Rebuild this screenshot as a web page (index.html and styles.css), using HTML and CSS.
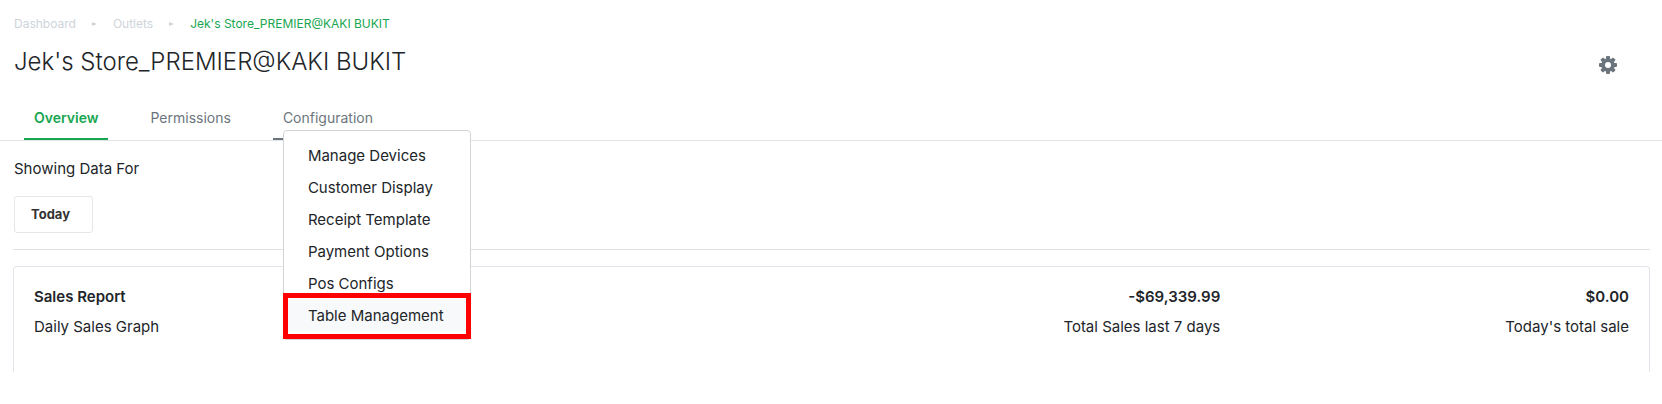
FILE: index.html
```html
<!DOCTYPE html>
<html lang="en">
<head>
    <meta charset="UTF-8">
    <meta name="viewport" content="width=device-width, initial-scale=1.0">
    <title>Jek's Store_PREMIER@KAKI BUKIT</title>
    <link rel="stylesheet" href="styles.css">
</head>
<body>
    <header class="header">
        <nav class="breadcrumb">
            <a href="#">Dashboard</a>
            <span class="arrow"></span>
            <a href="#">Outlets</a>
            <span class="arrow"></span>
            <a href="#" class="current">Jek's Store_PREMIER@KAKI BUKIT</a>
        </nav>
        <div class="title-row">
            <h1>Jek's Store_PREMIER@KAKI BUKIT</h1>
            <button type="button" class="settings" aria-label="Settings">
                <svg width="18" height="18" viewBox="0 0 18 18">
                    <g fill="#6c757d">
                        <rect x="7" y="0" width="4" height="18" rx="1"/>
                        <rect x="7" y="0" width="4" height="18" rx="1" transform="rotate(45 9 9)"/>
                        <rect x="7" y="0" width="4" height="18" rx="1" transform="rotate(90 9 9)"/>
                        <rect x="7" y="0" width="4" height="18" rx="1" transform="rotate(135 9 9)"/>
                        <circle cx="9" cy="9" r="6.8"/>
                    </g>
                    <circle cx="9" cy="9" r="3" fill="#fff"/>
                </svg>
            </button>
        </div>
    </header>
    <nav class="tabs">
        <a href="#" class="tab active">Overview</a>
        <a href="#" class="tab">Permissions</a>
        <div class="dropdown">
            <a href="#" class="tab open">Configuration</a>
            <ul class="menu">
                <li><a href="#">Manage Devices</a></li>
                <li><a href="#">Customer Display</a></li>
                <li><a href="#">Receipt Template</a></li>
                <li><a href="#">Payment Options</a></li>
                <li><a href="#">Pos Configs</a></li>
                <li class="marked"><a href="#">Table Management</a></li>
            </ul>
        </div>
    </nav>
    <main class="content">
        <section class="filter">
            <p>Showing Data For</p>
            <button type="button" class="range">Today</button>
        </section>
        <section class="card">
            <div class="col">
                <h2>Sales Report</h2>
                <p>Daily Sales Graph</p>
            </div>
            <div class="col right">
                <h2>-$69,339.99</h2>
                <p>Total Sales last 7 days</p>
            </div>
            <div class="col right">
                <h2>$0.00</h2>
                <p>Today's total sale</p>
            </div>
        </section>
    </main>
</body>
</html>
```
FILE: styles.css
```css
* {
    padding: 0;
    margin: 0;
    box-sizing: border-box;
}
body {
    font-family: Inter, "Liberation Sans", sans-serif;
    font-size: 15px;
    line-height: 24px;
    color: #212529;
    background-color: #fff;
}
a {
    color: inherit;
    text-decoration: none;
}
li {
    list-style: none;
}
button {
    font-family: inherit;
    background-color: #fff;
    border: none;
    cursor: pointer;
}
.header {
    padding: 14px 14px 0;
}
.breadcrumb {
    display: flex;
    align-items: center;
    gap: 16px;
    font-size: 12px;
    line-height: 20px;
    color: #ced4da;
}
.arrow {
    border-left: 5px solid #ced4da;
    border-top: 2px solid transparent;
    border-bottom: 2px solid transparent;
}
.current {
    color: #18a651;
}
.title-row {
    display: flex;
    align-items: center;
    justify-content: space-between;
    padding: 12px 31px 0 0;
}
h1 {
    font-size: 24px;
    font-weight: 300;
    line-height: 32px;
}
.settings {
    padding-top: 6px;
}
.settings svg {
    display: block;
}
.tabs {
    display: flex;
    gap: 32px;
    padding: 24px 24px 0;
    border-bottom: 1px solid #e2e5e8;
}
.tab {
    display: block;
    padding: 4px 10px 8px;
    font-size: 14px;
    color: #6c757d;
    border-bottom: 2px solid transparent;
}
.active {
    font-weight: 600;
    color: #18a651;
    border-color: #18a651;
}
.open {
    border-color: #6c757d;
}
.dropdown {
    position: relative;
}
.menu {
    position: absolute;
    left: 10px;
    top: 28px;
    padding: 8px 0;
    white-space: nowrap;
    background-color: #fff;
    border: 1px solid #d3d4d5;
    border-radius: 4px;
}
.menu a {
    display: block;
    padding: 5px 26px 3px 24px;
}
.marked {
    position: relative;
    background-color: #f8f9fa;
}
/* red frame round the chosen item */
.marked::after {
    content: "";
    position: absolute;
    left: -1px;
    right: -1px;
    top: -6px;
    bottom: -8px;
    border: 5px solid #f00;
    pointer-events: none;
}
.content {
    padding: 16px 12px 0 13px;
}
.filter {
    padding: 0 1px 16px;
    margin-bottom: 16px;
    border-bottom: 1px solid #dee2e6;
}
.range {
    display: block;
    margin-top: 15px;
    padding: 8px 22px 8px 16px;
    font-size: 13px;
    font-weight: 700;
    line-height: 19px;
    color: #333;
    border: 1px solid #e4e6e9;
    border-radius: 3px;
}
.card {
    display: grid;
    grid-template-columns: 2fr 1fr 1fr;
    padding: 15px 0 30px;
    border: 1px solid #e2e5ec;
    border-bottom: none;
    border-radius: 4px 4px 0 0;
}
.col {
    padding: 0 20px;
}
.col h2 {
    font-size: 15px;
    font-weight: 600;
    line-height: 30px;
}
.col p {
    line-height: 30px;
}
.right {
    text-align: right;
}
```
